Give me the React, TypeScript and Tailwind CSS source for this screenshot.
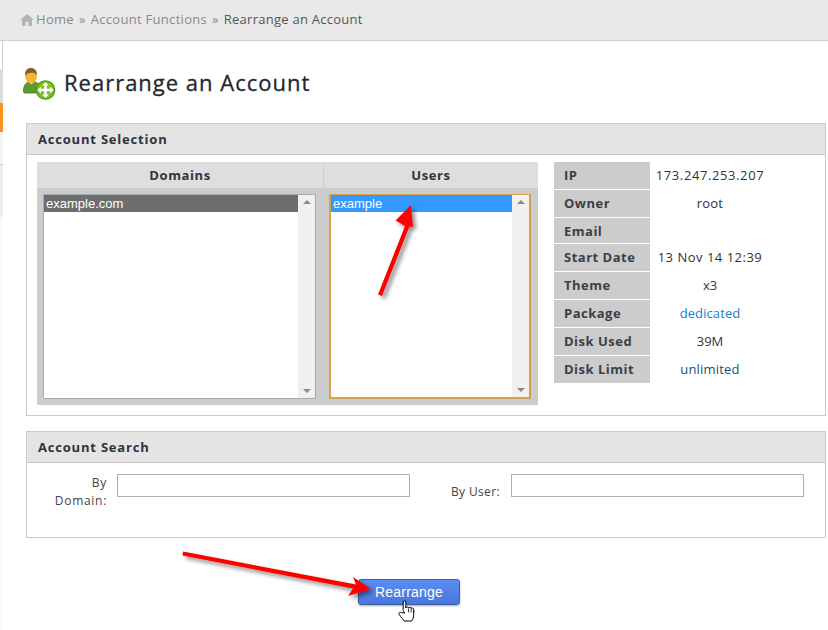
const font = "font-['Open_Sans','Noto_Sans',sans-serif]";

const info: [string, string, string][] = [
  ['IP', '173.247.253.207', 'tracking-[0.6px] text-[#333]'],
  ['Owner', 'root', 'tracking-[0.2px] text-[#333]'],
  ['Email', '', 'text-[#333]'],
  ['Start Date', '13 Nov 14 12:39', 'tracking-[0.5px] text-[#333]'],
  ['Theme', 'x3', 'text-[#333]'],
  ['Package', 'dedicated', 'tracking-[0.1px] text-[#1b7fc4]'],
  ['Disk Used', '39M', 'text-[#333]'],
  ['Disk Limit', 'unlimited', 'tracking-[0.2px] text-[#1d4e6e]'],
];
const rowHeights = ['h-[27px]', 'h-[27px]', 'h-[25px]', 'h-[27px]', 'h-[27px]', 'h-[27px]', 'h-[27px]', 'h-[27px]'];

function ListBox({ text, width, selected, focused }: { text: string; width: string; selected: string; focused?: boolean }) {
  return (
    <div
      className={`flex h-[205px] ${width} ${focused ? 'border-x-2 border-t border-b-2 border-[#d0a24e]' : 'border border-[#a5a9b2]'} bg-white rounded-[1px]`}
    >
      <div className="flex-1 min-w-0">
        <div className={`h-[17px] ${selected} pl-[2px] font-['Liberation_Sans',sans-serif] text-[13px] leading-[17px] text-white`}>
          {text}
        </div>
      </div>
      <div className="flex w-[17px] shrink-0 flex-col items-center justify-between bg-[#f0f0f0] py-[5px]">
        <span className="h-0 w-0 border-x-4 border-b-4 border-x-transparent border-b-[#8a8a8a]" />
        <span className="h-0 w-0 border-x-4 border-t-4 border-x-transparent border-t-[#8a8a8a]" />
      </div>
    </div>
  );
}

function Panel({ title, height, children }: { title: string; height: string; children: React.ReactNode }) {
  return (
    <section className={`${height} border border-[#cacaca] bg-white`}>
      <h2 className="h-[31px] border-b border-[#cacaca] bg-[#e4e4e4] pl-[11px] text-[13px] font-bold leading-[30px] tracking-[0.8px] text-[#2d3440]">
        {title}
      </h2>
      {children}
    </section>
  );
}

function PageIcon() {
  return (
    <svg width="33" height="33" viewBox="0 0 33 33" className="-ml-[3px] shrink-0">
      <path d="M0.500 24c0-5 2-8 5-9l3 3 3-3c2.500.5 4 1.500 5 3.500L13 26H1z" fill="#5d9a2c" stroke="#3f7a1d" strokeWidth="0.8" />
      <ellipse cx="8" cy="10" rx="5.800" ry="6.500" fill="#f2b632" />
      <path d="M2.200 9c-.6-5.500 2.300-8 5.800-8s6.400 2.500 5.800 7.500c-1.500-2.600-3-3-5.600-2.700-2.300.2-4.600.8-6 3.200z" fill="#8a5a1e" />
      <circle cx="22.500" cy="23" r="9.200" fill="#7cbf25" stroke="#4f9a14" strokeWidth="1.200" />
      <path d="M22.500 15l3.400 3.400h-2.100v3.300h3.300v-2.100l3.400 3.400-3.400 3.400v-2.100h-3.300v3.300h2.100L22.500 31l-3.400-3.400h2.100v-3.300h-3.300v2.100L14.500 23l3.400-3.400v2.100h3.300v-3.300h-2.100z" fill="#fff" />
    </svg>
  );
}

export default function App() {
  return (
    <div className={`relative h-[630px] w-[828px] overflow-hidden bg-white ${font} text-[#333]`}>
      <nav className="flex h-[41px] items-center border-b border-[#cfcfcf] bg-[#e9e9e9] pl-[20px] text-[13px] tracking-[0.3px] text-[#8a8a8a]">
        <svg width="14" height="13" viewBox="0 0 14 13" className="mr-[2px] -translate-y-[1px]">
          <path d="M7 1L0 7h2v6h3.500V9h3v4H12V7h2z" fill="#b4b4b4" />
        </svg>
        <span>Home</span>
        <span className="mx-[5px]">»</span>
        <span>Account Functions</span>
        <span className="mx-[5px]">»</span>
        <span className="tracking-[0.25px] text-[#555]">Rearrange an Account</span>
      </nav>

      <div className="flex h-[589px]">
        <aside className="flex w-[3px] flex-col bg-[#fafafa]">
          <div className="h-[28px] border-r border-[#cfcfcf] bg-white" />
          <div className="h-[34px] bg-[#dcdcdc]" />
          <div className="h-[29px] bg-[#f7941e]" />
          <div className="h-[33px] border-b border-[#cfcfcf] bg-[#f2f2f2]" />
          <div className="h-[52px] bg-[#ededed]" />
        </aside>

        <main className="w-[823px] pl-[23px] pt-[26px]">
          <div className="flex h-[33px] items-center">
            <PageIcon />
            <h1 className="ml-[8px] -translate-y-[1px] text-[22px] font-normal leading-[33px] tracking-[1px] text-[#23272f] [-webkit-text-stroke:0.3px_#23272f]">
              Rearrange an Account
            </h1>
          </div>

          <div className="mt-[23px] flex flex-col gap-[15px]">
            <Panel title="Account Selection" height="h-[293px]">
              <div className="flex pl-[10px] pt-[7px]">
                <div className="h-[243px] w-[501px] bg-[#cccccc]">
                  <div className="flex h-[26px] bg-[#dedede] text-[13px] font-bold leading-[26px] tracking-[0.6px] text-[#2d3440]">
                    <div className="w-[287px] border-r border-[#cfcfcf] text-center">Domains</div>
                    <div className="flex-1 text-center">Users</div>
                  </div>
                  <div className="flex gap-[13px] pb-[6px] pl-[6px] pt-[6px]">
                    <ListBox text="example.com" width="w-[273px]" selected="bg-[#6e6e6e]" />
                    <ListBox text="example" width="w-[202px]" selected="bg-[#3399ff]" focused />
                  </div>
                </div>
                <dl className="ml-[16px] flex w-[224px] flex-col gap-[1px]">
                  {info.map(([label, value, tone], i) => (
                    <div key={label} className={`flex ${rowHeights[i]}`}>
                      <dt className="w-[96px] bg-[#cccccc] pl-[10px] text-[13px] font-bold leading-[26px] tracking-[0.5px] text-[#3a3f48]">
                        {label}
                      </dt>
                      <dd className={`flex-1 pr-[8px] text-center text-[13px] leading-[26px] ${tone}`}>
                        {value}
                      </dd>
                    </div>
                  ))}
                </dl>
              </div>
            </Panel>

            <Panel title="Account Search" height="h-[107px]">
              <div className="flex pt-[11px] text-[12px] leading-[18px] tracking-[0.35px] text-[#444]">
                <label className="ml-[26px] w-[54px] text-right tracking-[0.7px]">By Domain:</label>
                <input className="ml-[10px] h-[23px] w-[293px] border border-[#b0b0b0] bg-white" aria-label="By Domain" />
                <label className="ml-[41px] whitespace-nowrap pt-[9px]">By User:</label>
                <input className="ml-[11px] h-[23px] w-[293px] border border-[#b0b0b0] bg-white" aria-label="By User" />
              </div>
            </Panel>
          </div>

          <div className="mt-[41px] flex pl-[332px]">
            <button className="h-[26px] w-[102px] rounded-[3px] border border-[#3a62a8] bg-gradient-to-b from-[#5c8cf2] to-[#4a76dc] font-['Liberation_Sans',sans-serif] text-[14px] tracking-[0.2px] text-white shadow-[0_1px_2px_rgba(0,0,0,0.35)]">
              Rearrange
            </button>
          </div>
        </main>
      </div>

      {/* screenshot annotations */}
      <svg width="828" height="630" viewBox="0 0 828 630" className="pointer-events-none absolute inset-0">
        <defs>
          <filter id="arrowShadow" x="-30%" y="-30%" width="160%" height="160%">
            <feDropShadow dx="3" dy="3" stdDeviation="2" floodColor="#000" floodOpacity="0.45" />
          </filter>
        </defs>
        <g filter="url(#arrowShadow)" fill="#ff0000">
          <path d="M378 294.500L405 226 395.500 220.500 411 205 413 227 409.500 226.500 382 296z" />
          <path d="M183 551.500L356 584.500 353 577 371 589 348 596 353 588.500 182.500 555.500z" />
        </g>
        <path
          d="M405 613c-1.500-1-1.800-2-1.800-3.500V602c0-1.800 2.600-1.800 2.600 0v6c.3-1.500 2.800-1.400 2.800.2.300-1.300 2.600-1.200 2.600.4.500-1 2.500-.8 2.500.8v5.500c0 3-1 4.600-2 6.100h-7.500c-1-1.500-3-3.500-5-6.500-1-1.500.8-3 2.300-1.800z"
          fill="#fff"
          stroke="#000"
          strokeWidth="1"
        />
        <path d="M408.600 608.500v4M411.200 609v3.500M413.700 610v3" fill="none" stroke="#000" strokeWidth="0.8" />
      </svg>
    </div>
  );
}
